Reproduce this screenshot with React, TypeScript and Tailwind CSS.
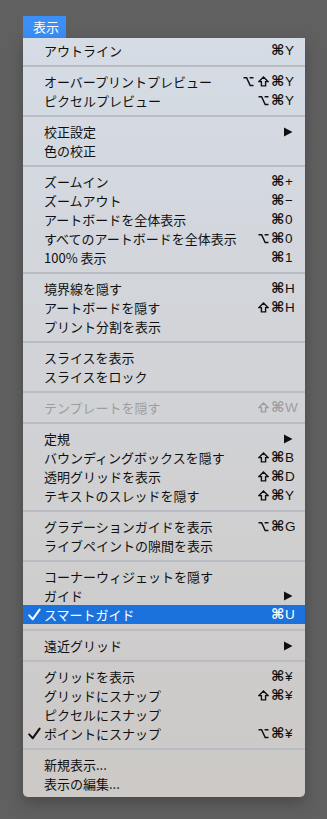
type Item = {
  label: string;
  mods?: string;
  keyChar?: string;
  sub?: boolean;
  checked?: boolean;
  active?: boolean;
  disabled?: boolean;
};

const groups: Item[][] = [
  [{ label: "アウトライン", mods: "⌘", keyChar: "Y" }],
  [
    { label: "オーバープリントプレビュー", mods: "⌥⇧⌘", keyChar: "Y" },
    { label: "ピクセルプレビュー", mods: "⌥⌘", keyChar: "Y" },
  ],
  [{ label: "校正設定", sub: true }, { label: "色の校正" }],
  [
    { label: "ズームイン", mods: "⌘", keyChar: "+" },
    { label: "ズームアウト", mods: "⌘", keyChar: "−" },
    { label: "アートボードを全体表示", mods: "⌘", keyChar: "0" },
    { label: "すべてのアートボードを全体表示", mods: "⌥⌘", keyChar: "0" },
    { label: "100% 表示", mods: "⌘", keyChar: "1" },
  ],
  [
    { label: "境界線を隠す", mods: "⌘", keyChar: "H" },
    { label: "アートボードを隠す", mods: "⇧⌘", keyChar: "H" },
    { label: "プリント分割を表示" },
  ],
  [{ label: "スライスを表示" }, { label: "スライスをロック" }],
  [{ label: "テンプレートを隠す", mods: "⇧⌘", keyChar: "W", disabled: true }],
  [
    { label: "定規", sub: true },
    { label: "バウンディングボックスを隠す", mods: "⇧⌘", keyChar: "B" },
    { label: "透明グリッドを表示", mods: "⇧⌘", keyChar: "D" },
    { label: "テキストのスレッドを隠す", mods: "⇧⌘", keyChar: "Y" },
  ],
  [
    { label: "グラデーションガイドを表示", mods: "⌥⌘", keyChar: "G" },
    { label: "ライブペイントの隙間を表示" },
  ],
  [
    { label: "コーナーウィジェットを隠す" },
    { label: "ガイド", sub: true },
    { label: "スマートガイド", mods: "⌘", keyChar: "U", checked: true, active: true },
  ],
  [{ label: "遠近グリッド", sub: true }],
  [
    { label: "グリッドを表示", mods: "⌘", keyChar: "¥" },
    { label: "グリッドにスナップ", mods: "⇧⌘", keyChar: "¥" },
    { label: "ピクセルにスナップ" },
    { label: "ポイントにスナップ", mods: "⌥⌘", keyChar: "¥", checked: true },
  ],
  [{ label: "新規表示..." }, { label: "表示の編集..." }],
];

function Check() {
  return (
    <svg width="13" height="13" viewBox="0 0 13 13" className="ml-[5px]">
      <path d="M1.2 7.4 L4.8 11.2 L11.6 1.6" fill="none" stroke="currentColor" strokeWidth="2" strokeLinecap="round" strokeLinejoin="round" />
    </svg>
  );
}

function Mod({ m }: { m: string }) {
  if (m === "⇧")
    return (
      <svg width="11" height="11" viewBox="0 0 11 11">
        <path d="M5.5 1 L10 5.6 L7.6 5.6 L7.6 9.9 L3.4 9.9 L3.4 5.6 L1 5.6 Z" fill="none" stroke="currentColor" strokeWidth="1.4" strokeLinejoin="miter" />
      </svg>
    );
  if (m === "⌥")
    return (
      <svg width="11" height="11" viewBox="0 0 11 11">
        <path d="M0.5 1.8 H3.6 L7.2 9.6 H10.5 M6.6 1.8 H10.5" fill="none" stroke="currentColor" strokeWidth="1.5" />
      </svg>
    );
  return <span className="font-['DejaVu_Sans'] text-[14.5px] leading-[19px] font-bold">{m}</span>;
}

function Row({ item }: { item: Item }) {
  const tone = item.active
    ? "bg-[#1c72dc] text-white"
    : item.disabled
      ? "text-[#9d9d9f]"
      : "text-[#101010]";
  return (
    <div className={`flex h-[19px] items-center ${tone}`}>
      <div className="flex w-[21px] items-center">{item.checked && <Check />}</div>
      <div className="flex-1 text-[13px] leading-[19px] whitespace-nowrap">{item.label}</div>
      {item.mods && (
        <div className="flex">
          {item.mods.split("").map((m, i) => (
            <span key={i} className="flex h-[19px] w-[14.5px] items-center justify-center">
              <Mod m={m} />
            </span>
          ))}
        </div>
      )}
      <div className="w-[20px] font-['Liberation_Sans'] text-[13.5px] leading-[19px]">
        {item.keyChar}
        {item.sub && (
          <svg width="9" height="10" viewBox="0 0 9 10" className="-ml-[1px]">
            <path d="M0 0.5 L8.5 5 L0 9.5 Z" fill="currentColor" />
          </svg>
        )}
      </div>
    </div>
  );
}

export default function App() {
  return (
    <div className="h-[819px] w-[327px] bg-[#606060] pt-4 pl-[23px] font-['Noto_Sans_CJK_JP',sans-serif]">
      <div className="flex h-[22px] w-[43px] items-center bg-[#3b8ff6] pl-[10px] text-[13px] text-white">
        表示
      </div>
      <div className="w-[282px] rounded-b-[5px] bg-gradient-to-b from-[#d5dce5] via-[#d1d2d5] to-[#ccc9c6] pt-[3px] pb-[4px] shadow-[0_6px_16px_rgba(0,0,0,0.25)]">
        {groups.map((g, gi) => (
          <div key={gi}>
            {gi > 0 && (
              <div className="py-[5px]">
                <div className="h-[2px] bg-[#b9bdc3]" />
              </div>
            )}
            {g.map((item) => (
              <Row key={item.label} item={item} />
            ))}
          </div>
        ))}
      </div>
    </div>
  );
}
